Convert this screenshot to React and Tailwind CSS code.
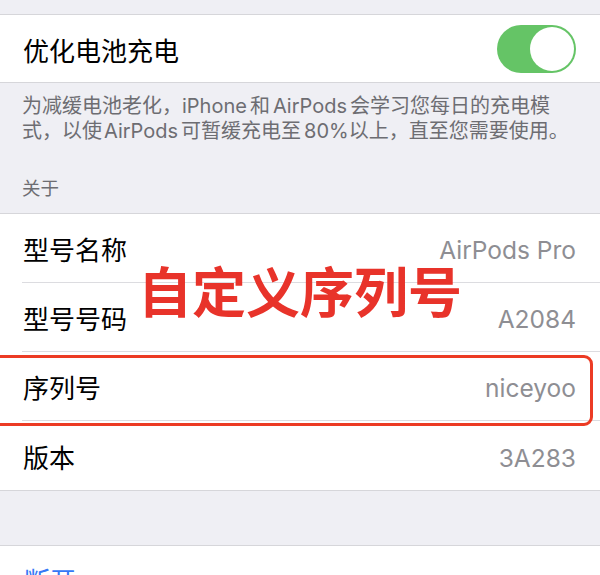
export default function App() {
  const font = { fontFamily: 'Inter, "Noto Sans CJK SC", sans-serif' };
  const rows = [
    { label: '型号名称', value: 'AirPods Pro' },
    { label: '型号号码', value: 'A2084' },
    { label: '序列号', value: 'niceyoo', boxed: true },
    { label: '版本', value: '3A283' },
  ];

  return (
    <div className="relative h-[575px] w-[600px] overflow-hidden bg-[#efeff4]" style={font}>
      <div className="h-[15px] border-b border-[#d6d6da]" />

      <div className="flex h-[68px] items-center justify-between border-b border-[#d6d6da] bg-white pl-[23px] pr-[24px]">
        <span className="pt-[6px] text-[26px] text-black">优化电池充电</span>
        <div className="flex h-[48px] w-[79px] items-center justify-end rounded-full bg-[#65c466] pr-[2px]">
          <div className="h-[44px] w-[44px] rounded-full bg-white" />
        </div>
      </div>

      <div className="h-[130px] px-[22px] pt-[11px]">
        <p className="text-[20px] leading-[25px] text-[#6d6d72]">
          为减缓电池老化，iPhone<span className="ml-[3px]">和</span><span className="ml-[3px]">AirPods</span>
          <span className="ml-[3px]">会学习您每日的充电模</span>
          <br />
          式，以使<span className="ml-[2px]">AirPods</span><span className="ml-[3px]">可暂缓充电至</span>
          <span className="ml-[3px]">80%</span>以上，直至您需要使用。
        </p>
        <p className="mt-[32px] text-[18.5px] leading-[24px] text-[#6d6d72]">关于</p>
      </div>

      <div className="border-y border-[#d6d6da] bg-white">
        {rows.map((row, i) => (
          <div key={row.label} className="relative pl-[22px]">
            <div
              className={
                'flex h-[69px] items-center justify-between pr-[24px] pt-[5px] ' +
                (i < rows.length - 1 ? 'border-b border-[#dcdce0]' : '')
              }
            >
              <span className="pl-[1px] text-[26px] text-black">{row.label}</span>
              <span className="text-[24.5px] text-[#8e8e93]">{row.value}</span>
            </div>
            {row.boxed && (
              <div className="pointer-events-none absolute left-[-9px] right-[7px] top-[3px] bottom-[-5px] rounded-[9px] border-[3.5px] border-[#ec3b24]" />
            )}
          </div>
        ))}
      </div>

      <div className="h-[55px] border-b border-[#d6d6da]" />
      <div className="bg-white pl-[24px] pt-[16px]">
        <span className="text-[26px] text-[#3478f6]">断开</span>
      </div>

      <div className="absolute left-[138px] top-[267px] text-[54px] font-semibold leading-none text-[#e8332a]">
        自定义序列号
      </div>
    </div>
  );
}
